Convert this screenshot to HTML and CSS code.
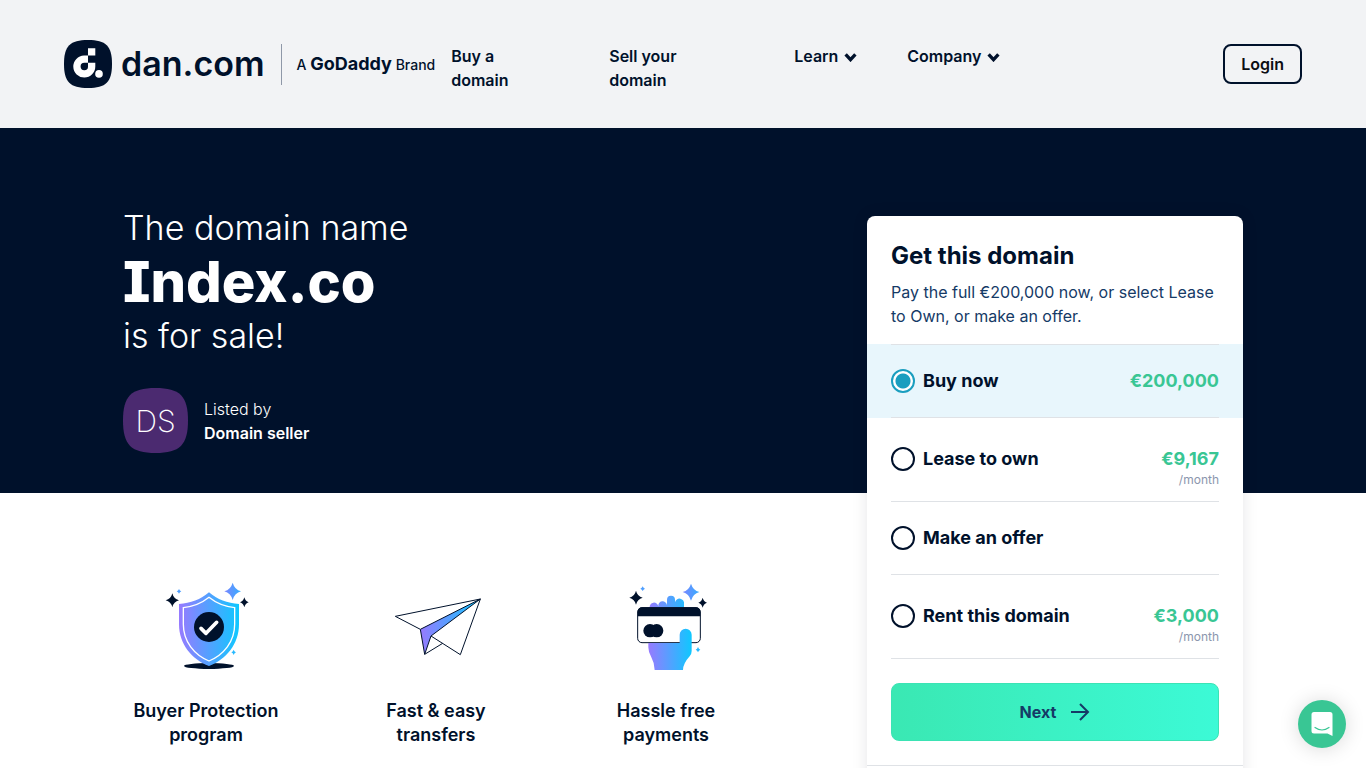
FILE: index.html
```html
<!DOCTYPE html>
<html lang="en">
<head>
    <meta charset="UTF-8">
    <meta name="viewport" content="width=device-width, initial-scale=1.0">
    <title>Index.co is for sale</title>
    <link rel="stylesheet" href="styles.css">
</head>
<body>

    <header class="header">
        <a class="logo" href="#">
            <svg class="logo-mark" viewBox="0 0 48 48" aria-hidden="true">
                <path fill="#00112b" d="M24 0C42 0 48 6 48 24S42 48 24 48 0 42 0 24 6 0 24 0Z"/>
                <path fill="#fff" d="M24 8.3h7.3v7.3H24zM24 15.6H20A11 11 0 1 0 31.3 26.6V22.8H24V26.4A3.7 3.7 0 1 1 20.3 22.8H24Z"/>
                <circle fill="#fff" cx="35" cy="33.9" r="3.8"/>
            </svg>
            <span class="logo-name">dan.com</span>
            <span class="logo-brand">A <b>GoDaddy</b> Brand</span>
        </a>

        <nav class="nav">
            <a class="nav-link" href="#">Buy a domain</a>
            <a class="nav-link" href="#">Sell your domain</a>
            <a class="nav-link" href="#">Learn
                <svg class="chevron" viewBox="0 0 12 9" aria-hidden="true"><path d="M1.5 2 6 7l4.500-5"/></svg>
            </a>
            <a class="nav-link" href="#">Company
                <svg class="chevron" viewBox="0 0 12 9" aria-hidden="true"><path d="M1.5 2 6 7l4.500-5"/></svg>
            </a>
        </nav>

        <button class="login" type="button">Login</button>
    </header>

    <main class="page">
        <div class="hero-bg"></div>

        <section class="hero">
            <h1 class="hero-title">The domain name <strong>Index.co</strong> is for sale!</h1>
            <div class="seller">
                <div class="seller-avatar">
                    <svg class="avatar-shape" viewBox="0 0 48 48" aria-hidden="true"><path fill="#4b2a70" d="M24 0C42 0 48 6 48 24S42 48 24 48 0 42 0 24 6 0 24 0Z"/></svg>
                    <span class="avatar-text">DS</span>
                </div>
                <p class="seller-info">Listed by<br><strong>Domain seller</strong></p>
            </div>
        </section>

        <!-- Purchase options -->
        <form class="card">
            <div class="card-head">
                <h2 class="card-title">Get this domain</h2>
                <p class="card-text">Pay the full €200,000 now, or select Lease to Own, or make an offer.</p>
            </div>

            <div class="option">
                <label class="option-row option-first">
                    <input class="radio" type="radio" name="plan" checked>
                    <span class="option-name">Buy now</span>
                    <span class="price">€200,000</span>
                </label>
            </div>
            <div class="option">
                <label class="option-row option-monthly">
                    <input class="radio" type="radio" name="plan">
                    <span class="option-name">Lease to own</span>
                    <span class="price">€9,167</span>
                    <span class="period">/month</span>
                </label>
            </div>
            <div class="option">
                <label class="option-row">
                    <input class="radio" type="radio" name="plan">
                    <span class="option-name">Make an offer</span>
                </label>
            </div>
            <div class="option">
                <label class="option-row option-monthly">
                    <input class="radio" type="radio" name="plan">
                    <span class="option-name">Rent this domain</span>
                    <span class="price">€3,000</span>
                    <span class="period">/month</span>
                </label>
            </div>

            <div class="card-action">
                <button class="next" type="submit">Next
                    <svg class="arrow" viewBox="0 0 20 20" aria-hidden="true"><path d="M1 10h17M10 2l8 8-8 8"/></svg>
                </button>
            </div>
            <div class="card-foot"></div>
        </form>

        <!-- Benefits -->
        <section class="features">
            <div class="feature">
                <svg class="feature-icon" viewBox="-3 0 330 315" aria-hidden="true">
                    <defs>
                        <linearGradient id="shield" x1="0" x2="1"><stop offset="0" stop-color="#977aff"/><stop offset="1" stop-color="#0fc8ff"/></linearGradient>
                        <linearGradient id="star" x1="0" x2="1"><stop offset="0" stop-color="#7a86ff"/><stop offset="1" stop-color="#35adff"/></linearGradient>
                    </defs>
                    <ellipse fill="#00112b" cx="171" cy="273" rx="75" ry="9"/>
                    <path fill="url(#shield)" d="M171 52C196 74 226 85 261 87V148C261 208 222 254 171 273 120 254 81 208 81 148V87C116 85 146 74 171 52Z"/>
                    <path fill="none" stroke="#fff" stroke-width="4" d="M171 67C193 85 219 95 248 98V148C248 200 215 240 171 258 127 240 94 200 94 148V98C123 95 149 85 171 67Z"/>
                    <circle fill="#00112b" cx="171" cy="156" r="45"/>
                    <path fill="none" stroke="#fff" stroke-width="11" stroke-linecap="round" stroke-linejoin="round" d="m147 160 15 15 32-33"/>
                    <path fill="#00112b" d="M61 55Q65 72 81 76 65 80 61 97 57 80 41 76 57 72 61 55ZM277 67Q280 79 290 82 280 85 277 97 274 85 264 82 274 79 277 67Z"/>
                    <path fill="url(#star)" d="M242 23Q248 44 267 49 248 54 242 75 236 54 217 49 236 44 242 23Z"/>
                    <path fill="#4f9fff" d="M81 42Q83 47 88 49 83 51 81 56 79 51 74 49 79 47 81 42Z"/>
                    <path fill="#26b9ff" d="M245 224Q247 230 252 232 247 234 245 240 243 234 238 232 243 230 245 224Z"/>
                </svg>
                <h3 class="feature-title">Buyer Protection program</h3>
            </div>
            <div class="feature">
                <svg class="feature-icon" viewBox="-3 0 330 315" aria-hidden="true">
                    <defs>
                        <linearGradient id="plane" x1="0" x2="1"><stop offset="0" stop-color="#977aff"/><stop offset="1" stop-color="#0fc8ff"/></linearGradient>
                    </defs>
                    <g fill="none" stroke="#00112b" stroke-width="3" stroke-linejoin="round">
                        <path d="M115 163 40 124 295 72 235 239 147 183M128 238 182 205"/>
                        <path fill="url(#plane)" d="M295 72 115 163 128 238 147 183Z"/>
                    </g>
                </svg>
                <h3 class="feature-title">Fast &amp; easy transfers</h3>
            </div>
            <div class="feature">
                <svg class="feature-icon" viewBox="-18 0 330 315" aria-hidden="true">
                    <defs>
                        <linearGradient id="hand" gradientUnits="userSpaceOnUse" x1="94" x2="224" y1="0" y2="0"><stop offset="0" stop-color="#977aff"/><stop offset="1" stop-color="#0fc8ff"/></linearGradient>
                    </defs>
                    <path fill="url(#hand)" d="M98 98a13 13 0 0 1 26-4a13 13 0 0 1 26-4V74a12 12 0 0 1 24 0v8a13 13 0 0 1 27 5v11Z"/>
                    <rect fill="#fff" stroke="#00112b" stroke-width="3" x="62" y="98" width="188" height="105" rx="13"/>
                    <path fill="#00112b" d="M62 124v-13q0-14 14-14h160q14 0 14 14v13Z"/>
                    <circle fill="#00112b" cx="99" cy="167" r="20"/>
                    <circle fill="#00112b" cx="119" cy="167" r="20"/>
                    <path fill="url(#hand)" d="M94 204h94v-25a18 18 0 0 1 36 0v49q0 9-6 16-20 22-20 41h-85q0-20-10-38-9-15-9-30Z"/>
                    <path fill="#00112b" d="M57 47Q61 64 77 68 61 72 57 89 53 72 37 68 53 64 57 47ZM257 68Q260 80 270 83 260 86 257 98 254 86 244 83 254 80 257 68Z"/>
                    <path fill="url(#star)" d="M222 26Q228 46 247 51 228 56 222 77 216 56 197 51 216 46 222 26Z"/>
                    <path fill="#4f9fff" d="M77 34Q79 39 84 41 79 43 77 48 75 43 70 41 75 39 77 34Z"/>
                    <path fill="#26b9ff" d="M243 216Q245 222 250 224 245 226 243 232 241 226 236 224 241 222 243 216Z"/>
                </svg>
                <h3 class="feature-title">Hassle free payments</h3>
            </div>
        </section>
    </main>

    <button class="chat" type="button" aria-label="Open chat">
        <svg class="chat-icon" viewBox="0 0 22 24" aria-hidden="true">
            <path fill="#fff" d="M3 0h16q2.500 0 2.500 2.500V24l-5-2.500H3Q.5 21.500.5 19V2.500Q.5 0 3 0Z"/>
            <path fill="none" stroke="#39c694" stroke-width="1.200" stroke-linecap="round" d="M4 15.500q7 5 14 0"/>
        </svg>
    </button>

</body>
</html>
```
FILE: styles.css
```css
:root {
    --navy: #00112b;
    --blue: #153a66;
    --green: #39c694;
    --teal: #1a9ebf;
    --line: #dfe2e6;
}

* {
    box-sizing: border-box;
}

body {
    margin: 0;
    font-family: Inter, "Liberation Sans", sans-serif;
    font-size: 16px;
    line-height: 24px;
    color: var(--navy);
    background: #fff;
}

h1, h2, h3, p {
    margin: 0;
}

a {
    color: inherit;
    text-decoration: none;
}

button {
    font-family: inherit;
    cursor: pointer;
}

/* Header */
.header {
    display: flex;
    align-items: center;
    min-height: 128px;
    padding: 0 64px;
    background: #f2f3f5;
}

.logo {
    display: flex;
    align-items: center;
    flex: none;
    margin-right: 16px;
}

.logo-mark {
    width: 48px;
    height: 48px;
    margin-right: 9px;
}

.logo-name {
    font-size: 34px;
    font-weight: 600;
    line-height: 40px;
}

.logo-brand {
    margin-left: 16px;
    padding-left: 15px;
    border-left: 1px solid #8f98a8;
    font-size: 14px;
    font-weight: 500;
    line-height: 40px;
    white-space: nowrap;
}

.logo-brand b {
    font-size: 18px;
    font-weight: 700;
}

.nav {
    display: grid;
    grid-template-columns: 158px 185px 113px auto;
    align-self: flex-start;
    padding-top: 44px;
    font-weight: 600;
}

.nav-link:nth-child(-n+2) {
    max-width: 96px;
}

.chevron {
    width: 13px;
    height: 10px;
    margin-left: 2px;
    fill: none;
    stroke: var(--navy);
    stroke-width: 3;
}

.login {
    height: 40px;
    margin-left: auto;
    padding: 0 16px;
    border: 2px solid var(--navy);
    border-radius: 8px;
    background: none;
    color: #0b0d12;
    font-size: 16px;
    font-weight: 600;
}

/* Page grid: the card spans the hero and the benefits */
.page {
    display: grid;
    grid-template-columns: 1fr minmax(0, 744px) 376px 1fr;
    grid-template-rows: auto 1fr;
}

.hero-bg {
    grid-area: 1 / 1 / 2 / -1;
    background: var(--navy);
}

.hero {
    grid-area: 1 / 2;
    padding: 76px 0 40px;
    color: #fff;
}

.hero-title {
    font-size: 34px;
    font-weight: 300;
    line-height: 48px;
}

.hero-title strong {
    display: block;
    font-size: 56px;
    font-weight: 800;
    line-height: 60px;
    font-feature-settings: "cv08";
}

.seller {
    display: flex;
    align-items: center;
    gap: 16px;
    margin-top: 28px;
}

.seller-avatar {
    display: grid;
    place-items: center;
    width: 65px;
    height: 65px;
}

.avatar-shape,
.avatar-text {
    grid-area: 1 / 1;
}

.avatar-text {
    font-size: 30px;
    font-weight: 200;
}

.seller-info {
    font-weight: 300;
}

.seller-info strong {
    font-weight: 600;
}

/* Card */
.card {
    grid-area: 1 / 3 / 3 / 4;
    align-self: start;
    margin: 88px 0 40px;
    border-radius: 8px;
    background: #fff;
    box-shadow: 0 0 16px rgba(0, 17, 43, 0.1);
}

.card-head {
    padding: 24px 24px 16px;
}

.card-title {
    margin-bottom: 8px;
    font-size: 24px;
    font-weight: 700;
    line-height: 32px;
}

.card-text {
    color: var(--blue);
}

.option {
    padding: 0 24px;
}

.option:has(.radio:checked) {
    background: #e8f6fc;
}

.option-row {
    display: grid;
    grid-template-columns: 24px 1fr auto;
    column-gap: 8px;
    align-items: center;
    padding: 24px 0;
    border-bottom: 1px solid var(--line);
    cursor: pointer;
}

.option-first {
    border-top: 1px solid var(--line);
}

.option-monthly {
    padding: 29px 0 12px;
}

.radio {
    appearance: none;
    width: 24px;
    height: 24px;
    margin: 0;
    border: 2px solid var(--navy);
    border-radius: 50%;
}

.radio:checked {
    border-color: var(--teal);
    background: radial-gradient(circle, var(--teal) 7px, #fff 8px);
}

.option-name,
.price {
    font-size: 18px;
    font-weight: 700;
}

.price {
    color: var(--green);
}

.period {
    grid-column: 3;
    color: #8b96ad;
    font-size: 12px;
    line-height: 18px;
    text-align: right;
}

.card-action {
    padding: 24px;
}

.next {
    display: flex;
    align-items: center;
    justify-content: center;
    gap: 14px;
    width: 100%;
    height: 58px;
    border: 1px solid #3be3b4;
    border-radius: 8px;
    background: linear-gradient(90deg, #3ae8b3, #3cfad6);
    color: var(--blue);
    font-size: 16px;
    font-weight: 700;
}

.arrow {
    width: 20px;
    height: 20px;
    fill: none;
    stroke: var(--blue);
    stroke-width: 2;
}

.card-foot {
    padding: 24px;
    border-top: 1px solid var(--line);
}

/* Benefits */
.features {
    grid-area: 2 / 2;
    display: grid;
    grid-template-columns: repeat(3, 166px);
    align-items: start;
    gap: 64px;
    padding: 82px 0 40px;
}

.feature {
    text-align: center;
}

.feature-icon {
    display: block;
    width: 110px;
    height: 105px;
    margin: 0 auto 19px;
}

.feature-title {
    font-size: 18px;
    font-weight: 600;
    line-height: 24px;
}

/* Chat launcher */
.chat {
    position: fixed;
    right: 20px;
    bottom: 20px;
    display: grid;
    place-items: center;
    width: 48px;
    height: 48px;
    padding: 0;
    border: none;
    border-radius: 50%;
    background: var(--green);
    box-shadow: 0 1px 20px rgba(0, 0, 0, 0.15);
}

.chat-icon {
    width: 22px;
    height: 24px;
}
```
